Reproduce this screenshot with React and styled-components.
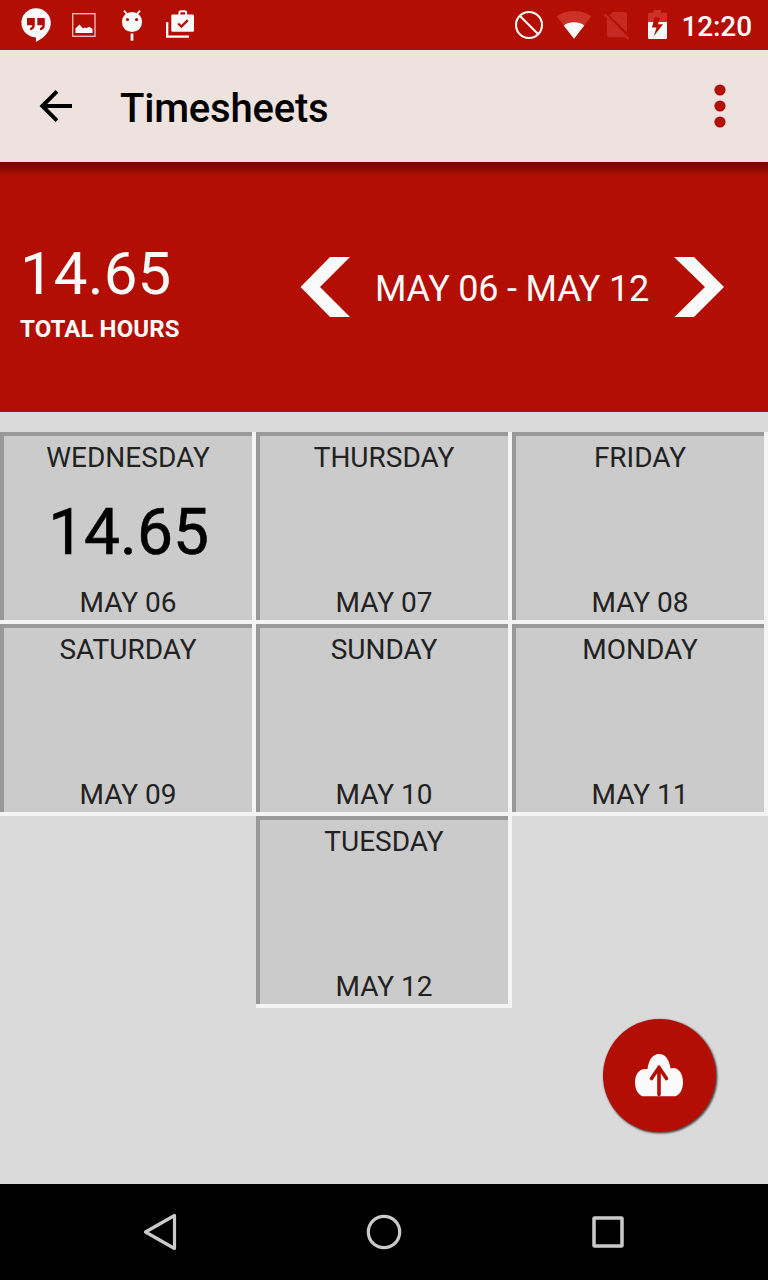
import React from "react";
import styled, { createGlobalStyle } from "styled-components";

const RED = "#b30e04";
const WHITE = "#fafafa";

const GlobalStyle = createGlobalStyle`
  * { box-sizing: border-box; }
  body { margin: 0; background: #dadada; font-family: Roboto, sans-serif; }
  svg { display: block; flex: none; }
`;

const Screen = styled.div`
  position: relative;
  display: flex;
  flex-direction: column;
  width: 768px;
  height: 1280px;
  overflow: hidden;
  background: #dadada;
`;

const StatusBar = styled.div`
  display: flex;
  flex: none;
  height: 50px;
  padding: 0 16px 0 12px;
  background: ${RED};
`;

const StatusGroup = styled.div`
  display: flex;
  margin-left: ${(p) => (p.$end ? "auto" : "0")};
`;

const Clock = styled.span`
  width: 71px;
  color: ${WHITE};
  font-size: 28px;
  font-weight: 500;
  line-height: 53px;
  letter-spacing: -0.1px;
  text-align: right;
  white-space: nowrap;
`;

const AppBar = styled.header`
  display: flex;
  flex: none;
  align-items: center;
  justify-content: space-between;
  height: 112px;
  padding: 0 32px;
  background: #ede2de;
`;

const BarButton = styled.button`
  display: flex;
  padding: 0;
  border: 0;
  background: none;
`;

const Title = styled.h1`
  flex: 1;
  margin: 0 0 0 40px;
  color: #000;
  font-size: 40px;
  font-weight: 500;
  line-height: 48px;
  letter-spacing: -0.2px;
  padding-top: 5px;
`;

const Summary = styled.section`
  display: flex;
  flex: none;
  justify-content: space-between;
  height: 250px;
  padding: 0 44px 0 20px;
  background: linear-gradient(rgba(0, 0, 0, 0.38), rgba(0, 0, 0, 0.29) 5px, rgba(0, 0, 0, 0.08) 11px, transparent 15px) ${RED};
`;

const Total = styled.div`
  padding-top: 76px;
  color: ${WHITE};
`;

const TotalValue = styled.div`
  font-size: 60px;
  font-weight: 400;
  line-height: 71px;
  letter-spacing: 0.15px;
`;

const TotalLabel = styled.div`
  padding-top: 4px;
  font-size: 24px;
  font-weight: 700;
  line-height: 32px;
  letter-spacing: 0.1px;
`;

const WeekPicker = styled.div`
  display: flex;
  align-items: center;
  justify-content: space-between;
  width: 424px;
`;

const WeekLabel = styled.span`
  padding-top: 3px;
  color: ${WHITE};
  font-size: 36px;
  font-weight: 400;
  line-height: 44px;
  letter-spacing: -0.2px;
  white-space: nowrap;
`;

const Days = styled.main`
  display: flex;
  flex: 1;
  flex-wrap: wrap;
  align-content: flex-start;
  justify-content: center;
  padding-top: 20px;
`;

const DayCell = styled.button`
  display: flex;
  flex-direction: column;
  align-items: center;
  width: 256px;
  height: 192px;
  padding: 9px 0 5px;
  border: 0;
  background: #cbcbcb;
  box-shadow: inset -4px -4px 0 #f4f4f4, inset 4px 4px 0 #999;
  color: #222;
  font-family: inherit;
`;

const DayText = styled.span`
  font-size: 28px;
  line-height: 33px;
`;

const DayHours = styled.span`
  flex: 1;
  padding: 5px 0 0 1px;
  color: #000;
  font-size: 64px;
  font-weight: 400;
  line-height: 107px;
  -webkit-text-stroke: 0.6px #000;
`;

const Fab = styled.button`
  position: absolute;
  right: 52px;
  bottom: 148px;
  display: flex;
  width: 113px;
  height: 113px;
  padding: 0;
  border: 0;
  border-radius: 50%;
  background: ${RED};
  box-shadow: 1px 1px 2px 0.5px rgba(0, 0, 0, 0.65);
`;

const NavBar = styled.nav`
  display: flex;
  flex: none;
  align-items: center;
  justify-content: center;
  gap: 128px;
  height: 96px;
  background: #000;
`;

const days = [
  { name: "WEDNESDAY", date: "MAY 06", hours: "14.65" },
  { name: "THURSDAY", date: "MAY 07" },
  { name: "FRIDAY", date: "MAY 08" },
  { name: "SATURDAY", date: "MAY 09" },
  { name: "SUNDAY", date: "MAY 10" },
  { name: "MONDAY", date: "MAY 11" },
  { name: "TUESDAY", date: "MAY 12" },
];

const HangoutsIcon = () => (
  <svg width="48" height="50" viewBox="12 0 48 50">
    <path fill={WHITE} d="M36 8.200a14.600 14.600 0 1 0 0 29.200v4.500c9-4.300 14.800-11.300 14.800-19.100A14.700 14.700 0 0 0 36 8.200z" />
    <path fill={RED} d="M27 18h7.800v7.300c0 3-1.800 4.600-4.800 4.900v-2.300c1.500-.3 2.300-1.100 2.300-2.600H27zM37.300 18h7.500v7.300c0 3-1.800 4.600-4.800 4.900v-2.300c1.500-.3 2.300-1.100 2.300-2.600h-5z" />
  </svg>
);

const PictureIcon = () => (
  <svg width="48" height="50" viewBox="60 0 48 50">
    <rect x="72.700" y="13.700" width="22.300" height="22.600" fill="none" stroke="#f0b5b1" strokeWidth="1.400" />
    <path fill={WHITE} d="M75.500 33v-4.500l4-4 3.500 4 1.500-1 2 .5 3-1.200 3 2.200v4z" />
  </svg>
);

const DebugIcon = () => (
  <svg width="48" height="50" viewBox="108 0 48 50">
    <circle cx="132" cy="22" r="10.100" fill={WHITE} />
    <path d="M124 10.700l3.300 3.800M140 10.700l-3.300 3.800" stroke={WHITE} strokeWidth="1.900" fill="none" />
    <path d="M132 33.500v7.200" stroke={WHITE} strokeWidth="2.800" />
    <circle cx="127.500" cy="19.500" r="1.600" fill={RED} />
    <circle cx="136.600" cy="19.500" r="1.600" fill={RED} />
  </svg>
);

const StoreIcon = () => (
  <svg width="48" height="50" viewBox="156 0 48 50">
    <path d="M167.200 22v14.700h21.700" fill="none" stroke={WHITE} strokeWidth="2.300" />
    <rect x="171.300" y="14.600" width="22.700" height="17.200" rx="1.200" fill={WHITE} />
    <path d="M179.400 15v-2.200q0-1.500 1.500-1.500h3.800q1.500 0 1.500 1.500V15" fill="none" stroke={WHITE} strokeWidth="2" />
    <path d="M178.200 23.400l3.100 3.200 6.500-6.500" fill="none" stroke={RED} strokeWidth="2.200" />
  </svg>
);

const BlockedIcon = () => (
  <svg width="45" height="50" viewBox="506 0 45 50">
    <circle cx="529" cy="25" r="13" fill="none" stroke={WHITE} strokeWidth="2.100" />
    <path d="M520 16l18 18" stroke={WHITE} strokeWidth="2.100" />
  </svg>
);

const WifiIcon = () => (
  <svg width="45" height="50" viewBox="551 0 45 50">
    <path fill="#cb3126" d="M574 38.800L556.800 16.300Q564.500 11 574 11t17.200 5.300z" />
    <path fill={WHITE} d="M574 38.800l-10.300-13.400Q568 22.200 574 22.200t10.300 3.200z" />
  </svg>
);

const NoSimIcon = () => (
  <svg width="42" height="50" viewBox="596 0 42 50">
    <path fill="#c52a20" d="M613 12h12q2 0 2 2v18.500L609.500 15.200zM607 18.500L626 37.300H609q-2 0-2-2z" />
    <path d="M604.500 14.200l24 24.700" stroke="#c52a20" strokeWidth="2.200" />
  </svg>
);

const BatteryIcon = () => (
  <svg width="43" height="50" viewBox="638 0 43 50">
    <path fill="#cb3126" d="M648 22v-8.200q0-1 1-1h4.500V10h7.500v2.800h5q1 0 1 1V22z" />
    <path fill={WHITE} d="M648 22h19v15.800q0 1.200-1.200 1.200h-16.600q-1.200 0-1.200-1.200z" />
    <path fill={RED} d="M660 17.500h-5.500L652 27.500h4.500l-2.800 8.700 9.300-12H658z" />
  </svg>
);

const BackArrow = () => (
  <svg width="48" height="48" viewBox="32 82 48 48">
    <path d="M72 106H42M57 91.300L42.300 106 57 120.700" fill="none" stroke="#000" strokeWidth="3.900" />
  </svg>
);

const Overflow = () => (
  <svg width="32" height="48" viewBox="704 82 32 48" fill={RED}>
    <circle cx="720" cy="90" r="5.600" />
    <circle cx="720" cy="106" r="5.600" />
    <circle cx="720" cy="122" r="5.600" />
  </svg>
);

const Chevron = ({ next }) => (
  <svg width="50" height="60" viewBox="0 0 50 60" fill={WHITE}>
    <path d={next ? "M0 0h20l30 30-30 30H.5L31 30z" : "M50 0H30L.500 30 30 60h20L20 30z"} />
  </svg>
);

const CloudUpload = () => (
  <svg width="113" height="113" viewBox="603 1019 113 113">
    <path
      fill={WHITE}
      d="M647.500 1069.200C648.500 1060.500 652.500 1054 659 1054s10.500 6 11.500 14.500c7-2.500 12.500 4.500 12.500 13.500 0 8-3.500 13-7.500 14.200h-33C638.500 1095 635 1090 635 1082c0-8 5-14.500 12.500-12.800z"
    />
    <path d="M659 1094.500v-27.500M651.500 1078.500l7.500-11 7.500 11" fill="none" stroke={RED} strokeWidth="3.600" strokeLinecap="round" strokeLinejoin="round" />
  </svg>
);

const navIcon = { width: 96, height: 96, fill: "none", stroke: "#cacaca", strokeWidth: 3.2, strokeLinejoin: "round" };

export default function App() {
  return (
    <Screen>
      <GlobalStyle />
      <StatusBar>
        <StatusGroup>
          <HangoutsIcon />
          <PictureIcon />
          <DebugIcon />
          <StoreIcon />
        </StatusGroup>
        <StatusGroup $end>
          <BlockedIcon />
          <WifiIcon />
          <NoSimIcon />
          <BatteryIcon />
          <Clock>12:20</Clock>
        </StatusGroup>
      </StatusBar>
      <AppBar>
        <BarButton aria-label="Back"><BackArrow /></BarButton>
        <Title>Timesheets</Title>
        <BarButton aria-label="More options"><Overflow /></BarButton>
      </AppBar>
      <Summary>
        <Total>
          <TotalValue>14.65</TotalValue>
          <TotalLabel>TOTAL HOURS</TotalLabel>
        </Total>
        <WeekPicker>
          <BarButton aria-label="Previous week"><Chevron /></BarButton>
          <WeekLabel>MAY 06 - MAY 12</WeekLabel>
          <BarButton aria-label="Next week"><Chevron next /></BarButton>
        </WeekPicker>
      </Summary>
      <Days>
        {days.map((day) => (
          <DayCell key={day.name}>
            <DayText>{day.name}</DayText>
            <DayHours>{day.hours}</DayHours>
            <DayText>{day.date}</DayText>
          </DayCell>
        ))}
      </Days>
      <Fab aria-label="Upload"><CloudUpload /></Fab>
      <NavBar>
        <svg {...navIcon} viewBox="112 1184 96 96"><path d="M145.500 1232L174.500 1215.500v33z" /></svg>
        <svg {...navIcon} viewBox="336 1184 96 96"><circle cx="384" cy="1232" r="15.700" /></svg>
        <svg {...navIcon} viewBox="560 1184 96 96" strokeWidth="3.500"><rect x="594" y="1218" width="28" height="28" rx="0.500" /></svg>
      </NavBar>
    </Screen>
  );
}
